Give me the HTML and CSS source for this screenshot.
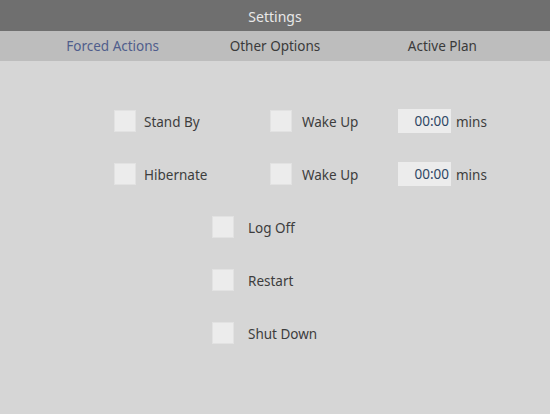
FILE: index.html
```html
<!DOCTYPE html>
<html>
<head>
<meta charset="utf-8">
<link rel="stylesheet" href="styles.css">
</head>
<body>
<div class="app">
  <header class="titlebar">Settings</header>
  <nav class="tabs">
    <span class="tab active">Forced Actions</span>
    <span class="tab">Other Options</span>
    <span class="tab">Active Plan</span>
  </nav>
  <main class="content">
    <div class="timed">
      <div class="row">
        <label class="opt first"><span class="box"></span><span class="lbl">Stand By</span></label>
        <label class="opt second"><span class="box"></span><span class="lbl">Wake Up</span></label>
        <span class="time">00:00</span><span class="unit">mins</span>
      </div>
      <div class="row">
        <label class="opt first"><span class="box"></span><span class="lbl">Hibernate</span></label>
        <label class="opt second"><span class="box"></span><span class="lbl">Wake Up</span></label>
        <span class="time">00:00</span><span class="unit">mins</span>
      </div>
    </div>
    <div class="simple">
      <label class="opt wide"><span class="box"></span><span class="lbl">Log Off</span></label>
      <label class="opt wide"><span class="box"></span><span class="lbl">Restart</span></label>
      <label class="opt wide"><span class="box"></span><span class="lbl">Shut Down</span></label>
    </div>
  </main>
</div>
</body>
</html>
```

FILE: styles.css
```css
* { box-sizing: border-box; margin: 0; padding: 0; }
html, body { width: 550px; height: 414px; overflow: hidden; }
body {
  font-family: "Noto Sans", "Open Sans", sans-serif;
  font-size: 13.5px;
  color: #3d3d3d;
  background: #d6d6d6;
}
.app { display: flex; flex-direction: column; height: 414px; }
.titlebar {
  height: 31px;
  background: #6f6f6f;
  color: #e8e8e8;
  display: flex;
  align-items: center;
  justify-content: center;
  font-size: 14px;
  padding-top: 1px;
}
.tabs {
  height: 30px;
  background: #bdbdbd;
  display: grid;
  grid-template-columns: 1fr 1fr 1fr;
  align-items: center;
  padding: 0 30px 0 30px;
}
.tab { text-align: center; color: #3a3a3a; }
.tab.active { color: #505d8c; }
.tab:first-child { padding-left: 2px; }
.tab:last-child { padding-left: 8px; }
.content {
  flex: 1;
  background: #d6d6d6;
  padding-top: 49px;
}
.timed { display: flex; flex-direction: column; gap: 31px; padding-left: 114px; }
.row { display: flex; align-items: center; height: 22px; }
.opt { display: flex; align-items: center; }
.box {
  width: 22px;
  height: 22px;
  background: #ececec;
  border: 1px solid #e2e2e2;
  flex: none;
}
.first { width: 156px; }
.first .lbl { margin-left: 8px; }
.second { width: 128px; }
.second .lbl { margin-left: 10px; }
.time {
  width: 53px;
  height: 24px;
  background: #ececec;
  color: #2e4664;
  text-align: right;
  padding-right: 2px;
  line-height: 24px;
}
.unit { margin-left: 5px; }
.lbl, .unit { padding-top: 1px; }
.simple {
  display: flex;
  flex-direction: column;
  gap: 31px;
  padding-left: 212px;
  margin-top: 31px;
}
.simple .opt { height: 22px; }
.wide .lbl { margin-left: 14px; }
```
